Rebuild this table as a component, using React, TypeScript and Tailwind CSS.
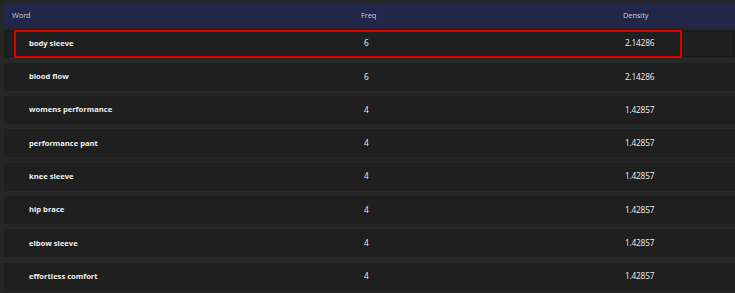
import React from "react";

type Row = { word: string; freq: number; density: string };

const rows: Row[] = [
  { word: "body sleeve", freq: 6, density: "2.14286" },
  { word: "blood flow", freq: 6, density: "2.14286" },
  { word: "womens performance", freq: 4, density: "1.42857" },
  { word: "performance pant", freq: 4, density: "1.42857" },
  { word: "knee sleeve", freq: 4, density: "1.42857" },
  { word: "hip brace", freq: 4, density: "1.42857" },
  { word: "elbow sleeve", freq: 4, density: "1.42857" },
  { word: "effortless comfort", freq: 4, density: "1.42857" },
];

const font = { fontFamily: '"Open Sans", "Noto Sans", sans-serif' };

export default function App() {
  return (
    <div
      className="w-[735px] h-[293px] overflow-hidden bg-[#262626] pt-[3px] pl-[4px]"
      style={font}
    >
      <div className="grid grid-cols-[357px_262px_1fr] h-[25px] items-center bg-[#21264a] text-[7.3px] text-[#d0d1d8]">
        <div className="pl-[8px]">Word</div>
        <div>Freq</div>
        <div>Density</div>
      </div>
      <div className="flex flex-col gap-[5.3px] pt-[1.5px]">
        {rows.map((r, i) => (
          <div
            key={r.word}
            className={`relative grid grid-cols-[357px_262px_1fr] h-[28px] items-center bg-[#1f1f1f] text-[#f0f0f0] ${
              i === 0 ? "outline-1 outline-dotted outline-[#121212] -outline-offset-2" : ""
            }`}
          >
            {i === 0 && (
              <div className="absolute left-[10px] top-0 w-[668px] h-full border-2 border-[#e00000]" />
            )}
            <div className="pl-[25px] text-[7.6px] font-bold">{r.word}</div>
            <div className="pl-[3px] text-[8.3px]">{r.freq}</div>
            <div className="pl-[2px] text-[8.3px] tracking-[-0.2px]">{r.density}</div>
          </div>
        ))}
      </div>
    </div>
  );
}
